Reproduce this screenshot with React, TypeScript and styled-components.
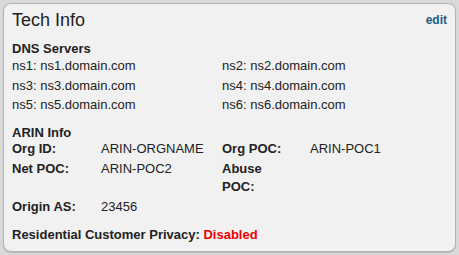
import { Fragment } from 'react';
import styled, { createGlobalStyle } from 'styled-components';

const GlobalStyle = createGlobalStyle`
  html, body {
    margin: 0;
    padding: 0;
    background: #d9d9d9;
  }
  body {
    font-family: "Liberation Sans", Arial, Helvetica, sans-serif;
    color: #222;
  }
`;

const dnsServers = [
  { name: 'ns1', host: 'ns1.domain.com' },
  { name: 'ns2', host: 'ns2.domain.com' },
  { name: 'ns3', host: 'ns3.domain.com' },
  { name: 'ns4', host: 'ns4.domain.com' },
  { name: 'ns5', host: 'ns5.domain.com' },
  { name: 'ns6', host: 'ns6.domain.com' },
];

const arinRows = [
  { label: 'Org ID:', value: 'ARIN-ORGNAME' },
  { label: 'Org POC:', value: 'ARIN-POC1' },
  { label: 'Net POC:', value: 'ARIN-POC2' },
  { label: 'Abuse POC:', value: '' },
  { label: 'Origin AS:', value: '23456' },
];

const App = () => {
  return (
    <>
      <GlobalStyle />
      <Panel>
        <Header>
          <Title>Tech Info</Title>
          <EditLink href="#">edit</EditLink>
        </Header>

        <SectionTitle>DNS Servers</SectionTitle>
        <DnsGrid>
          {dnsServers.map((ns) => (
            <span key={ns.name}>
              {ns.name}: {ns.host}
            </span>
          ))}
        </DnsGrid>

        <SectionTitle $gap={10}>ARIN Info</SectionTitle>
        <ArinGrid>
          {arinRows.map((row) => (
            <Fragment key={row.label}>
              <Label>{row.label}</Label>
              <Value>{row.value}</Value>
            </Fragment>
          ))}
        </ArinGrid>

        <Privacy>
          Residential Customer Privacy: <Status>Disabled</Status>
        </Privacy>
      </Panel>
    </>
  );
};

const Panel = styled.div`
  box-sizing: border-box;
  margin: 3px;
  height: 249px;
  padding: 4px 8px 0 8px;
  background: #f1f1f1;
  border: 1px solid #b3b3b3;
  border-radius: 8px;
  box-shadow: 0 1px 1px rgba(0, 0, 0, 0.15);
`;

const Header = styled.div`
  display: flex;
  justify-content: space-between;
  align-items: flex-start;
`;

const Title = styled.h2`
  margin: 0;
  font-size: 18px;
  font-weight: normal;
  line-height: 24px;
  color: #1f1f1f;
`;

const EditLink = styled.a`
  margin-top: 4px;
  font-size: 12px;
  font-weight: bold;
  line-height: 16px;
  color: #1d5b86;
  text-decoration: none;
`;

const SectionTitle = styled.h3<{ $gap?: number }>`
  margin: ${(p) => p.$gap ?? 9}px 0 0;
  font-size: 13px;
  font-weight: bold;
  line-height: 15px;
`;

const DnsGrid = styled.div`
  display: grid;
  grid-template-columns: 210px 1fr;
  font-size: 13px;
  line-height: 19.5px;
`;

const ArinGrid = styled.div`
  display: grid;
  grid-template-columns: 89px 121px 88px 1fr;
  row-gap: 2px;
  font-size: 13px;
  line-height: 18px;
`;

const Label = styled.div`
  font-weight: bold;
  padding-right: 16px;
`;

const Value = styled.div``;

const Privacy = styled.div`
  margin-top: 9px;
  font-size: 13px;
  font-weight: bold;
  line-height: 19px;
`;

const Status = styled.span`
  color: #f00000;
`;

export default App;
